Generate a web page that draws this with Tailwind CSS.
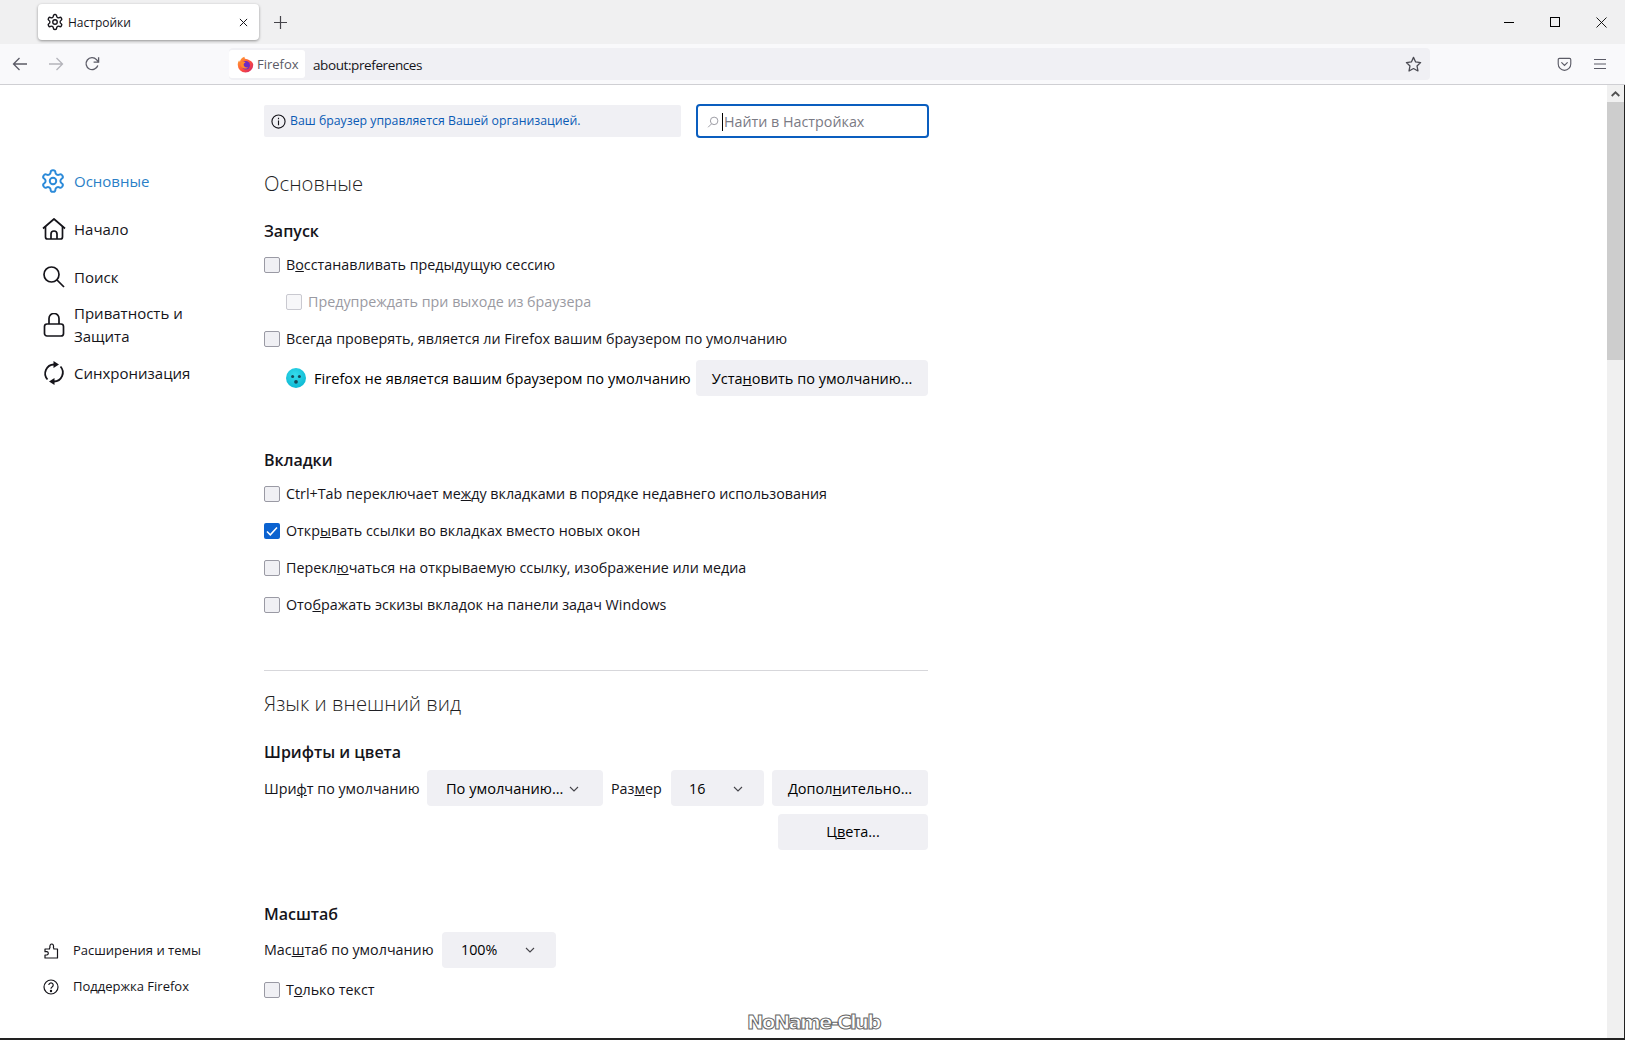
<!DOCTYPE html>
<html lang="ru">
<head>
    <meta charset="UTF-8">
    <title>Настройки</title>
    <script src="https://cdn.jsdelivr.net/npm/@tailwindcss/browser@4"></script>
</head>
<body class="h-[1040px] w-[1625px] overflow-hidden bg-white font-['Open_Sans','Noto_Sans',sans-serif] text-[14.3px] text-[#15141a] relative">

    <!-- Tab strip -->
    <div class="h-[44px] bg-[#f0f0f1] flex items-center pl-[38px] pr-[1px]">
        <div class="w-[221px] h-[36px] bg-white rounded-[4px] shadow-[0_1px_3px_rgba(0,0,0,0.4)] flex items-center pl-[8px] pr-[11px]">
            <svg class="w-[18px] h-[18px] text-[#15141a]" viewBox="0 0 24 24" fill="none" stroke="currentColor" stroke-width="1.8"><path d="M12.22 2h-.44a2 2 0 0 0-2 2v.18a2 2 0 0 1-1 1.73l-.43.25a2 2 0 0 1-2 0l-.15-.08a2 2 0 0 0-2.73.73l-.22.38a2 2 0 0 0 .73 2.73l.15.1a2 2 0 0 1 1 1.72v.51a2 2 0 0 1-1 1.74l-.15.09a2 2 0 0 0-.73 2.73l.22.38a2 2 0 0 0 2.73.73l.15-.08a2 2 0 0 1 2 0l.43.25a2 2 0 0 1 1 1.73V20a2 2 0 0 0 2 2h.44a2 2 0 0 0 2-2v-.18a2 2 0 0 1 1-1.73l.43-.25a2 2 0 0 1 2 0l.15.08a2 2 0 0 0 2.73-.73l.22-.39a2 2 0 0 0-.73-2.73l-.15-.08a2 2 0 0 1-1-1.74v-.5a2 2 0 0 1 1-1.74l.15-.09a2 2 0 0 0 .73-2.73l-.22-.38a2 2 0 0 0-2.73-.73l-.15.08a2 2 0 0 1-2 0l-.43-.25a2 2 0 0 1-1-1.73V4a2 2 0 0 0-2-2z"/><circle cx="12" cy="12" r="3"/></svg>
            <span class="ml-[4px] pt-[1px] text-[12px]">Настройки</span>
            <svg class="ml-auto w-[9px] h-[9px]" viewBox="0 0 10 10" stroke="#15141a" stroke-width="1.1"><path d="M1 1l8 8M9 1l-8 8"/></svg>
        </div>
        <svg class="ml-[15px] w-[13px] h-[13px]" viewBox="0 0 13 13" stroke="#45444a" stroke-width="1.2"><path d="M6.5 0v13M0 6.5h13"/></svg>
        <div class="ml-auto flex items-center">
            <div class="w-[46px] flex justify-center"><div class="w-[10px] h-[1px] bg-black"></div></div>
            <div class="w-[46px] flex justify-center"><div class="w-[10px] h-[10px] border border-black"></div></div>
            <div class="w-[46px] flex justify-center"><svg class="w-[11px] h-[11px]" viewBox="0 0 11 11" stroke="#000" stroke-width="0.9"><path d="M0.5 0.5l10 10M10.5 0.5l-10 10"/></svg></div>
        </div>
    </div>

    <!-- Toolbar -->
    <div class="h-[41px] bg-[#f9f9fb] border-b border-[#cfcfd3] flex items-center">
        <div class="w-[229px] flex items-center">
            <svg class="ml-[12px] w-[16px] h-[16px]" viewBox="0 0 16 16" fill="none" stroke="#5b5b66" stroke-width="1.3"><path d="M15 8H1.5M7.5 2L1.5 8l6 6"/></svg>
            <svg class="ml-[20px] w-[16px] h-[16px]" viewBox="0 0 16 16" fill="none" stroke="#b4b4ba" stroke-width="1.3"><path d="M1 8h13.5M8.5 2l6 6-6 6"/></svg>
            <svg class="ml-[20px] w-[16px] h-[16px]" viewBox="0 0 16 16" fill="none" stroke="#5b5b66" stroke-width="1.3"><path d="M13.8 9.5A6 6 0 1 1 12.5 3.6L14.5 6"/><path d="M14.6 1.2V6.2H9.6"/></svg>
        </div>
        <div class="w-[1201px] h-[32px] bg-[#f0f0f4] rounded-[4px] flex items-center relative">
            <div class="w-[76px] h-[28px] bg-white rounded-[3px] flex items-center pl-[8px] shrink-0">
                <svg class="w-[17px] h-[17px] shrink-0" viewBox="0 0 16 16">
                    <defs><linearGradient id="fx" x1="0" y1="0" x2="1" y2="1"><stop offset="0" stop-color="#ffb02e"/><stop offset="0.55" stop-color="#ff4f3e"/><stop offset="1" stop-color="#c9206f"/></linearGradient></defs>
                    <path d="M8 15.5A7.3 7.3 0 0 1 .7 8.2C.7 6.5 1.3 5 2 4c.1.7.4 1.1.8 1.4C3 3.3 4.5 1.3 7.2.6 6.8 1.7 7.3 2.4 8.5 2.8c3 .8 6.8 2.5 6.8 5.4A7.3 7.3 0 0 1 8 15.5z" fill="url(#fx)"/>
                    <circle cx="8.3" cy="8.7" r="3.9" fill="#6e2bc4"/>
                    <path d="M3.3 6.2c2-1.2 4.2-.9 5 .3-1.1-.2-2 .5-2 1.8 0 2 2.4 3.2 4.4 2.3-1.3 1.7-5 1.8-6.7-.5-1-1.3-1-2.9-.7-3.9z" fill="#ff8a2b"/>
                </svg>
                <span class="ml-[3px] pt-[1px] text-[13px] text-[#5b5b66]">Firefox</span>
            </div>
            <span class="ml-[8px] pt-[2px] text-[13.5px] tracking-[-0.4px]">about:preferences</span>
            <svg class="ml-auto mr-[8px] w-[17px] h-[17px]" viewBox="0 0 16 16" fill="none" stroke="#4a4a52" stroke-width="1.2" stroke-linejoin="round"><path d="M8 1.3l2 4.3 4.7.6-3.4 3.2.9 4.7L8 11.8l-4.2 2.3.9-4.7L1.3 6.2 6 5.6z"/></svg>
        </div>
        <div class="flex-1 flex items-center pl-[127px]">
            <svg class="w-[15px] h-[15px]" viewBox="0 0 16 16" fill="none" stroke="#5b5b66" stroke-width="1.2"><path d="M2.6 1.5h10.8a1.3 1.3 0 0 1 1.3 1.3v4.7a6.7 6.7 0 0 1-13.4 0V2.8a1.3 1.3 0 0 1 1.3-1.3z"/><path d="M5 6l3 3 3-3" stroke-linecap="round"/></svg>
            <svg class="ml-[21px] w-[14px] h-[14px]" viewBox="0 0 14 14" stroke="#5b5b66" stroke-width="1.2"><path d="M1 2.5h12M1 7h12M1 11.5h12"/></svg>
        </div>
    </div>

    <div class="flex h-[955px]">
        <!-- Sidebar -->
        <nav class="w-[264px] shrink-0 flex flex-col justify-between pl-[42px] pt-[72px] pb-[43px] text-[15px]">
            <div class="flex flex-col">
                <a class="h-[48px] flex items-center gap-[6px]">
                    <svg class="w-[26px] h-[26px] -ml-[2px] shrink-0" viewBox="0 0 24 24" fill="none" stroke="#2b8ad9" stroke-width="1.8"><path d="M12.22 2h-.44a2 2 0 0 0-2 2v.18a2 2 0 0 1-1 1.73l-.43.25a2 2 0 0 1-2 0l-.15-.08a2 2 0 0 0-2.73.73l-.22.38a2 2 0 0 0 .73 2.73l.15.1a2 2 0 0 1 1 1.72v.51a2 2 0 0 1-1 1.74l-.15.09a2 2 0 0 0-.73 2.73l.22.38a2 2 0 0 0 2.73.73l.15-.08a2 2 0 0 1 2 0l.43.25a2 2 0 0 1 1 1.73V20a2 2 0 0 0 2 2h.44a2 2 0 0 0 2-2v-.18a2 2 0 0 1 1-1.73l.43-.25a2 2 0 0 1 2 0l.15.08a2 2 0 0 0 2.73-.73l.22-.39a2 2 0 0 0-.73-2.73l-.15-.08a2 2 0 0 1-1-1.74v-.5a2 2 0 0 1 1-1.74l.15-.09a2 2 0 0 0 .73-2.73l-.22-.38a2 2 0 0 0-2.73-.73l-.15.08a2 2 0 0 1-2 0l-.43-.25a2 2 0 0 1-1-1.73V4a2 2 0 0 0-2-2z"/><circle cx="12" cy="12" r="3"/></svg>
                    <span class="ml-[2px] text-[#2b7fc7]">Основные</span>
                </a>
                <a class="h-[48px] flex items-center gap-[8px]">
                    <svg class="w-[24px] h-[24px] shrink-0" viewBox="0 0 24 24" fill="none" stroke="#15141a" stroke-width="1.7" stroke-linejoin="round"><path d="M1 11.5L12 2l11 9.5"/><path d="M3.5 9.5V20a2 2 0 0 0 2 2h13a2 2 0 0 0 2-2V9.5"/><path d="M9 22v-5a3 3 0 0 1 6 0v5"/></svg>
                    <span>Начало</span>
                </a>
                <a class="h-[48px] flex items-center gap-[8px]">
                    <svg class="w-[24px] h-[24px] shrink-0" viewBox="0 0 24 24" fill="none" stroke="#15141a" stroke-width="1.7"><circle cx="9.5" cy="9.5" r="7.5"/><path d="M15 15L22 22"/></svg>
                    <span>Поиск</span>
                </a>
                <a class="h-[48px] flex items-center gap-[8px]">
                    <svg class="w-[24px] h-[24px] shrink-0" viewBox="0 0 24 24" fill="none" stroke="#15141a" stroke-width="1.7"><rect x="2.5" y="11" width="19" height="12" rx="2.5"/><path d="M7 11V5.500a5 5 0 0 1 10 0V11"/></svg>
                    <span class="leading-[23px]">Приватность и<br>Защита</span>
                </a>
                <a class="h-[48px] flex items-center gap-[8px]">
                    <svg class="w-[24px] h-[24px] shrink-0" viewBox="0 0 24 24" fill="none" stroke="#15141a" stroke-width="1.8"><path d="M5.5 18.5A9 9 0 0 1 12 3.5"/><path d="M18.5 5.5A9 9 0 0 1 12 20.5"/><path d="M11.5 0L17 3.5 11.5 7z" fill="#15141a" stroke="none"/><path d="M12.5 17L7 20.5 12.5 24z" fill="#15141a" stroke="none"/></svg>
                    <span>Синхронизация</span>
                </a>
            </div>
            <div class="flex flex-col gap-[16px] text-[13px]">
                <a class="h-[20px] flex items-center gap-[14px]">
                    <svg class="w-[16px] h-[16px] ml-[1px] shrink-0" viewBox="0 0 16 16" fill="none" stroke="#15141a" stroke-width="1.2" stroke-linejoin="round"><path d="M2 6h4.500a1.500 1.500 0 0 1 .5-1.500c-.6-2 .6-3.500 1.800-3.500s2.200 1.500 1.600 3.500c.3.500.5 1 .5 1.500H14.500V15H2v-3h2a1.700 1.700 0 0 0 0-3.300H2z"/></svg>
                    <span>Расширения и темы</span>
                </a>
                <a class="h-[20px] flex items-center gap-[14px]">
                    <svg class="w-[16px] h-[16px] ml-[1px] shrink-0" viewBox="0 0 16 16" fill="none" stroke="#15141a" stroke-width="1.2"><circle cx="8" cy="8" r="7"/><path d="M5.8 6a2.2 2.2 0 1 1 3.3 2c-.8.5-1.100.9-1.100 1.800"/><circle cx="8" cy="12" r=".6" fill="#15141a"/></svg>
                    <span>Поддержка Firefox</span>
                </a>
            </div>
        </nav>

        <!-- Settings pane -->
        <main class="w-[665px] shrink-0 pt-[19px]">
            <div class="flex h-[34px] gap-[15px]">
                <div class="w-[417px] h-[32px] mt-[1px] pt-[1px] bg-[#f0f0f4] rounded-[2px] flex items-center pl-[7px] text-[12.3px] text-[#0b5bb5]">
                    <svg class="w-[15px] h-[15px] shrink-0 mr-[4px]" viewBox="0 0 16 16" fill="none" stroke="#15141a" stroke-width="1.2"><circle cx="8" cy="8" r="7"/><path d="M8 7v5M8 4v1.5"/></svg>
                    <span>Ваш браузер управляется Вашей организацией.</span>
                </div>
                <div class="w-[233px] h-[34px] pt-[1px] border-2 border-[#0a5ebf] rounded-[4px] flex items-center pl-[9px] text-[14.3px] text-[#7a7a84]">
                    <svg class="w-[12px] h-[12px] shrink-0" viewBox="0 0 16 16" fill="none" stroke="#9a9aa2" stroke-width="1.3"><circle cx="9.5" cy="6.5" r="5"/><path d="M6 10.5L1.5 15"/></svg>
                    <span class="ml-[3px] border-l border-black pl-[1px] leading-[18px]">Найти в Настройках</span>
                </div>
            </div>

            <h1 class="mt-[29px] h-[32px] text-[20.3px] font-light leading-[32px] text-[#1f1f24]">Основные</h1>
            <h2 class="mt-[20px] h-[24px] text-[16px] font-semibold leading-[24px]">Запуск</h2>
            <label class="mt-[10px] h-[24px] flex items-center gap-[6px]">
                <span class="w-[16px] h-[16px] bg-[#f0f0f4] border border-[#9a9aa4] rounded-[2px]"></span>
                <span>В<u>о</u>сстанавливать предыдущую сессию</span>
            </label>
            <label class="mt-[13px] h-[24px] flex items-center gap-[6px] pl-[22px] text-[#9a9aa2]">
                <span class="w-[16px] h-[16px] bg-[#f7f7f9] border border-[#c9c9d0] rounded-[2px]"></span>
                <span>Предупреждать при выходе из браузера</span>
            </label>
            <label class="mt-[13px] h-[24px] flex items-center gap-[6px]">
                <span class="w-[16px] h-[16px] bg-[#f0f0f4] border border-[#9a9aa4] rounded-[2px]"></span>
                <span>Всег<u>д</u>а проверять, является ли Firefox вашим браузером по умолчанию</span>
            </label>
            <div class="mt-[9px] h-[36px] flex items-center pl-[22px] text-[14.6px] text-black">
                <svg class="w-[20px] h-[20px] shrink-0" viewBox="0 0 16 16"><defs><radialGradient id="sad" cx="0.45" cy="0.35" r="0.75"><stop offset="0" stop-color="#35dcec"/><stop offset="1" stop-color="#08b4d0"/></radialGradient></defs><circle cx="8" cy="8" r="8" fill="url(#sad)"/><circle cx="5.3" cy="6.7" r="1.2" fill="#15495a"/><circle cx="10.7" cy="6.7" r="1.2" fill="#15495a"/><circle cx="8" cy="11" r="1.5" fill="#15495a"/></svg>
                <span class="ml-[8px] pt-[1px] w-[381px] font-medium whitespace-nowrap">Firefox не является вашим браузером по умолчанию</span>
                <button class="ml-[1px] w-[232px] h-[36px] pt-[1px] bg-[#f0f0f4] rounded-[4px] font-medium text-[14.5px]">Уста<u>н</u>овить по умолчанию...</button>
            </div>

            <h2 class="mt-[52px] h-[24px] text-[16px] font-semibold leading-[24px]">Вкладки</h2>
            <label class="mt-[10px] h-[24px] flex items-center gap-[6px]">
                <span class="w-[16px] h-[16px] bg-[#f0f0f4] border border-[#9a9aa4] rounded-[2px]"></span>
                <span>Ctrl+Tab переключает ме<u>ж</u>ду вкладками в порядке недавнего использования</span>
            </label>
            <label class="mt-[13px] h-[24px] flex items-center gap-[6px]">
                <span class="w-[16px] h-[16px] bg-[#0a62d0] rounded-[2px] flex items-center justify-center">
                    <svg class="w-[12px] h-[12px]" viewBox="0 0 12 12" fill="none" stroke="#fff" stroke-width="1.5"><path d="M1 6.5l3.300 3.300L11 2.500"/></svg>
                </span>
                <span>Откр<u>ы</u>вать ссылки во вкладках вместо новых окон</span>
            </label>
            <label class="mt-[13px] h-[24px] flex items-center gap-[6px]">
                <span class="w-[16px] h-[16px] bg-[#f0f0f4] border border-[#9a9aa4] rounded-[2px]"></span>
                <span>Перекл<u>ю</u>чаться на открываемую ссылку, изображение или медиа</span>
            </label>
            <label class="mt-[13px] h-[24px] flex items-center gap-[6px]">
                <span class="w-[16px] h-[16px] bg-[#f0f0f4] border border-[#9a9aa4] rounded-[2px]"></span>
                <span>Ото<u>б</u>ражать эскизы вкладок на панели задач Windows</span>
            </label>

            <hr class="mt-[53px] w-[664px] border-t border-[#d7d7db]">
            <h1 class="mt-[16px] h-[32px] text-[20.3px] font-light leading-[32px] text-[#1f1f24]">Язык и внешний вид</h1>
            <h2 class="mt-[21px] h-[24px] text-[16px] font-semibold leading-[24px]">Шрифты и цвета</h2>
            <div class="mt-[6px] h-[36px] flex items-center">
                <span class="w-[163px] pt-[1px]">Шри<u>ф</u>т по умолчанию</span>
                <button class="w-[176px] h-[36px] pt-[1px] bg-[#f0f0f4] rounded-[4px] flex items-center pl-[19px] font-medium text-[14.6px] text-black">
                    <span>По умолчанию...</span>
                    <svg class="ml-[6px] w-[10px] h-[10px]" viewBox="0 0 10 10" fill="none" stroke="#45444a" stroke-width="1.1"><path d="M1 3l4 4 4-4"/></svg>
                </button>
                <span class="ml-[8px] w-[60px] pt-[1px]">Раз<u>м</u>ер</span>
                <button class="w-[93px] h-[36px] pt-[1px] bg-[#f0f0f4] rounded-[4px] flex items-center pl-[18px] font-medium text-black">
                    <span>16</span>
                    <svg class="ml-[28px] w-[10px] h-[10px]" viewBox="0 0 10 10" fill="none" stroke="#45444a" stroke-width="1.1"><path d="M1 3l4 4 4-4"/></svg>
                </button>
                <button class="ml-[8px] w-[156px] h-[36px] pt-[1px] bg-[#f0f0f4] rounded-[4px] font-medium text-[14.5px] text-black">Допол<u>н</u>ительно...</button>
            </div>
            <div class="mt-[8px] w-[664px] flex justify-end">
                <button class="w-[150px] h-[36px] bg-[#f0f0f4] rounded-[4px] font-medium text-[14.5px] text-black">Ц<u>в</u>ета...</button>
            </div>

            <h2 class="mt-[52px] h-[24px] text-[16px] font-semibold leading-[24px]">Масштаб</h2>
            <div class="mt-[6px] h-[36px] flex items-center">
                <span class="w-[178px]">Мас<u>ш</u>таб по умолчанию</span>
                <button class="w-[114px] h-[36px] bg-[#f0f0f4] rounded-[4px] flex items-center pl-[19px] font-medium text-black">
                    <span>100%</span>
                    <svg class="ml-[28px] w-[10px] h-[10px]" viewBox="0 0 10 10" fill="none" stroke="#45444a" stroke-width="1.1"><path d="M1 3l4 4 4-4"/></svg>
                </button>
            </div>
            <label class="mt-[10px] h-[24px] flex items-center gap-[6px]">
                <span class="w-[16px] h-[16px] bg-[#f0f0f4] border border-[#9a9aa4] rounded-[2px]"></span>
                <span>Т<u>о</u>лько текст</span>
            </label>
        </main>

        <!-- Page scrollbar -->
        <div class="ml-auto mr-[1px] w-[17px] bg-[#f0f0f0] flex flex-col">
            <div class="h-[17px] flex items-center justify-center">
                <svg class="w-[9px] h-[6px]" viewBox="0 0 9 6" fill="none" stroke="#505050" stroke-width="1.8"><path d="M.7 5L4.5 1.3 8.3 5"/></svg>
            </div>
            <div class="h-[258px] bg-[#cdcdcd]"></div>
        </div>
    </div>

    <!-- Window edge and watermark -->
    <div class="absolute right-0 top-[85px] bottom-0 w-[1px] bg-[#222]"></div>
    <div class="absolute left-0 right-0 bottom-0 h-[2px] bg-[#222]"></div>
    <div class="absolute left-[747px] top-[1009px] font-['DejaVu_Sans',sans-serif] text-[20px] font-bold leading-[26px] tracking-[-1.9px] text-white [-webkit-text-stroke:1px_#666]">NoName-Club</div>
</body>
</html>
